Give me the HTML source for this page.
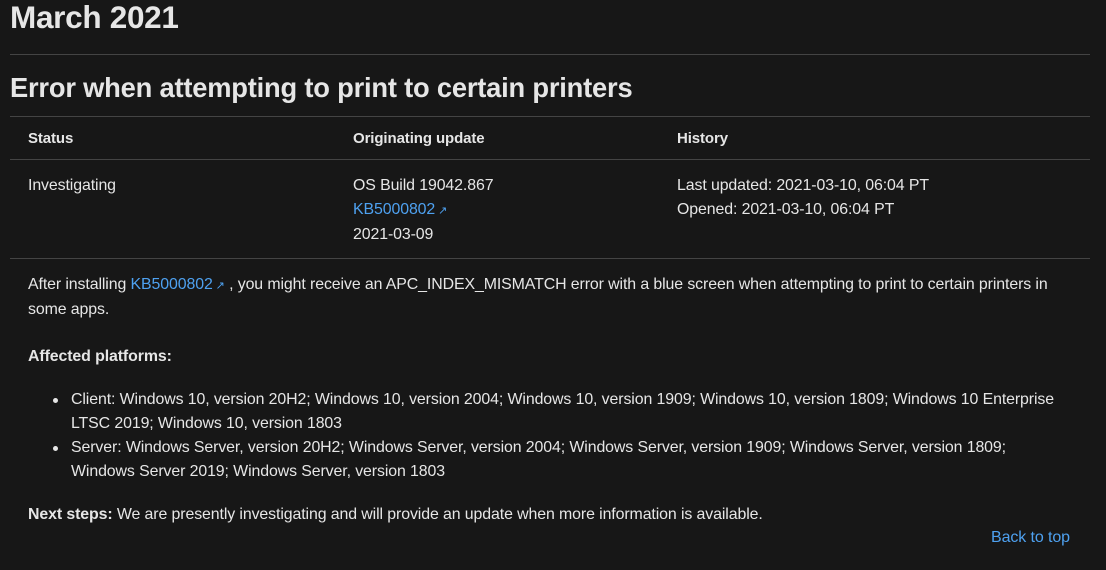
<!DOCTYPE html>
<html><head><meta charset="utf-8"><style>
body{margin:0;background:#171717;color:#e6e6e6;font-family:"Liberation Sans",sans-serif;width:1106px;height:570px;overflow:hidden;position:relative}
.a{position:absolute;white-space:nowrap;font-size:15.9px;line-height:24px;letter-spacing:-0.1px}
.hr{position:absolute;left:10px;width:1080px;height:1px;background:#444}
b{font-weight:bold}
.l{color:#4ea1f0}
.dot{position:absolute;width:5px;height:5px;border-radius:50%;background:#e6e6e6}
</style></head><body>
<div class="a" style="left:10px;top:-3px;font-size:31.5px;line-height:40px;font-weight:bold;letter-spacing:-0.3px">March 2021</div>
<div class="hr" style="top:54px"></div>
<div class="a" style="left:10px;top:70px;font-size:27.3px;line-height:36px;font-weight:bold;letter-spacing:-0.2px">Error when attempting to print to certain printers</div>
<div class="hr" style="top:116px"></div>
<div class="a" style="left:28px;top:127px;font-size:15px"><b>Status</b></div>
<div class="a" style="left:353px;top:127px;font-size:15px"><b>Originating update</b></div>
<div class="a" style="left:677px;top:127px;font-size:15px"><b>History</b></div>
<div class="hr" style="top:159px"></div>
<div class="a" style="left:28px;top:174px">Investigating</div>
<div class="a" style="left:353px;top:174px">OS Build 19042.867<br><span class="l">KB5000802</span><span class="l" style="font-size:11px"> ↗</span><br>2021-03-09</div>
<div class="a" style="left:677px;top:174px">Last updated: 2021-03-10, 06:04 PT<br>Opened: 2021-03-10, 06:04 PT</div>
<div class="hr" style="top:258px"></div>
<div class="a" style="left:28px;top:273px">After installing <span class="l">KB5000802</span><span class="l" style="font-size:11px"> ↗</span> , you might receive an APC_INDEX_MISMATCH error with a blue screen when attempting to print to certain printers in<br>some apps.</div>
<div class="a" style="left:28px;top:345px"><b>Affected platforms:</b></div>
<div class="dot" style="left:53px;top:398px"></div>
<div class="a" style="left:71px;top:388px">Client: Windows 10, version 20H2; Windows 10, version 2004; Windows 10, version 1909; Windows 10, version 1809; Windows 10 Enterprise<br>LTSC 2019; Windows 10, version 1803</div>
<div class="dot" style="left:53px;top:446px"></div>
<div class="a" style="left:71px;top:436px">Server: Windows Server, version 20H2; Windows Server, version 2004; Windows Server, version 1909; Windows Server, version 1809;<br>Windows Server 2019; Windows Server, version 1803</div>
<div class="a" style="left:28px;top:503px"><b>Next steps:</b> We are presently investigating and will provide an update when more information is available.</div>
<div class="a l" style="left:991px;top:526px;font-size:16px">Back to top</div>
</body></html>
